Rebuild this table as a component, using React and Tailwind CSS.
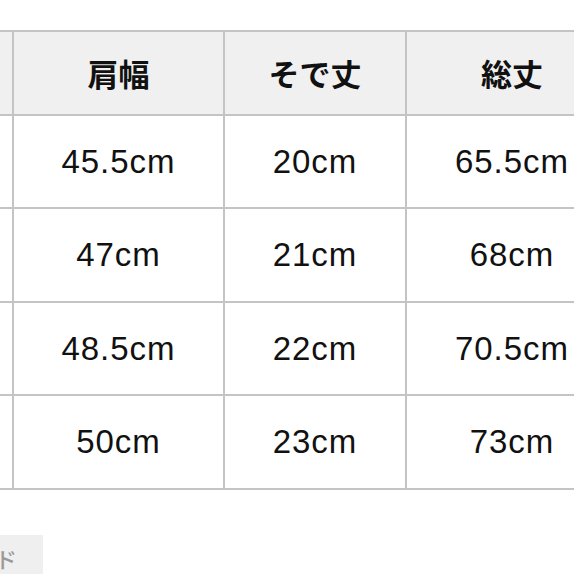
export default function App() {
  const header = ["着丈", "肩幅", "そで丈", "総丈"];
  const rows = [
    ["M", "45.5cm", "20cm", "65.5cm"],
    ["L", "47cm", "21cm", "68cm"],
    ["XL", "48.5cm", "22cm", "70.5cm"],
    ["XXL", "50cm", "23cm", "73cm"],
  ];
  return (
    <div className="w-[574px] h-[574px] bg-white overflow-hidden relative" style={{ fontFamily: '"Liberation Sans", "Noto Sans CJK JP", sans-serif' }}>
      <div className="pt-[30px]">
        <div className="ml-[-200px] w-max">
          <div className="grid grid-cols-[210px_209px_180px_210px] grid-rows-[82px_91px_92px_91px_92px] gap-[2px] bg-[#c4c4c4] border-2 border-[#c4c4c4]">
            {header.map((h, i) => (
              <div key={i} className="bg-[#f0f0f0] flex items-center justify-center text-[31px] font-bold text-[#111]" style={{ fontFamily: '"Noto Sans CJK JP", sans-serif' }}>
                {i === 0 ? "" : h}
              </div>
            ))}
            {rows.map((r, ri) =>
              r.map((c, ci) => (
                <div key={ri + "-" + ci} className="bg-white flex items-center justify-center text-[33px] tracking-[1px] text-[#111]">
                  {ci === 0 ? "" : c}
                </div>
              ))
            )}
          </div>
        </div>
      </div>
      <div className="mt-[45px] w-[43px] h-[40px] bg-[#efefef] overflow-hidden flex justify-end items-start pt-[7px] pr-[26px] whitespace-nowrap text-[22px] font-medium text-[#9a9a9a]" style={{ fontFamily: '"Noto Sans CJK JP", sans-serif' }}>
        ブランド
      </div>
    </div>
  );
}
